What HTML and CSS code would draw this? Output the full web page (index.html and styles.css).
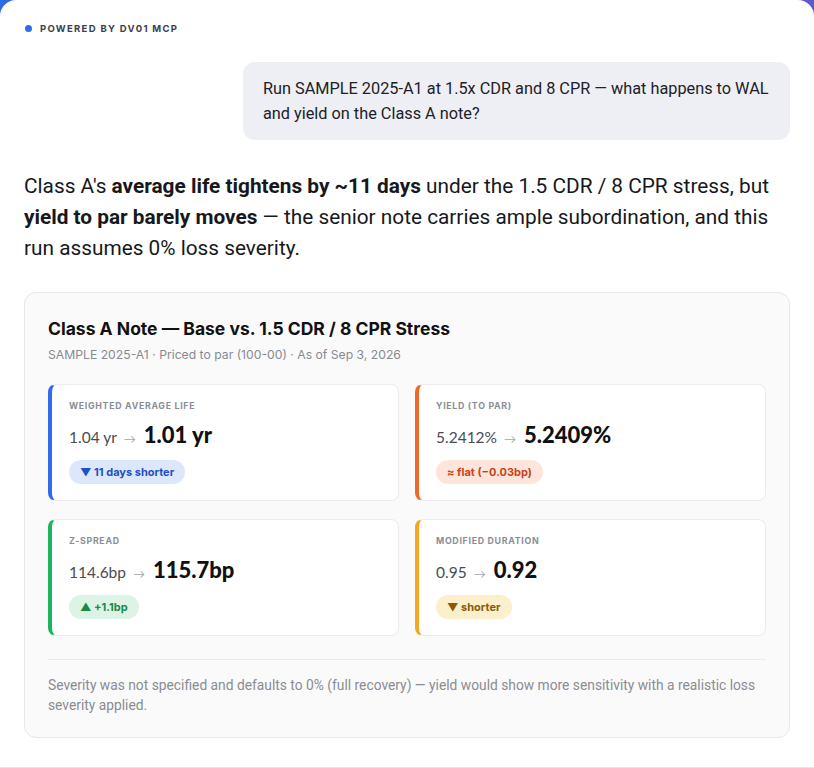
FILE: index.html
```html
<!DOCTYPE html>
<html lang="en">
<head>
  <meta charset="UTF-8">
  <meta name="viewport" content="width=device-width, initial-scale=1.0">
  <title>DV01 MCP - Class A stress run</title>
  <link rel="stylesheet" href="styles.css">
</head>

<body>
  <div id="panel">
    <div class="brand">
      <span class="brand-dot"></span>
      <span>POWERED BY DV01 MCP</span>
    </div>

    <div class="bubble-row">
      <div class="bubble">Run SAMPLE 2025-A1 at 1.5x CDR and 8 CPR — what happens to WAL and yield on the Class A note?</div>
    </div>

    <p class="answer">Class A's <b>average life tightens by ~11 days</b> under the 1.5 CDR / 8 CPR stress, but <b>yield to par barely moves</b> — the senior note carries ample subordination, and this run assumes 0% loss severity.</p>

    <div class="card">
      <h3>Class A Note — Base vs. 1.5 CDR / 8 CPR Stress</h3>
      <div class="sub">SAMPLE 2025-A1 · Priced to par (100-00) · As of Sep 3, 2026</div>

      <div class="tiles">
        <div class="tile blue">
          <div class="label">WEIGHTED AVERAGE LIFE</div>
          <div class="values"><span class="old">1.04 yr</span><span class="arrow">→</span><span class="new">1.01 yr</span></div>
          <span class="badge">▼ 11 days shorter</span>
        </div>
        <div class="tile orange">
          <div class="label">YIELD (TO PAR)</div>
          <div class="values"><span class="old">5.2412%</span><span class="arrow">→</span><span class="new">5.2409%</span></div>
          <span class="badge">≈ flat (−0.03bp)</span>
        </div>
        <div class="tile green">
          <div class="label">Z-SPREAD</div>
          <div class="values"><span class="old">114.6bp</span><span class="arrow">→</span><span class="new">115.7bp</span></div>
          <span class="badge">▲ +1.1bp</span>
        </div>
        <div class="tile amber">
          <div class="label">MODIFIED DURATION</div>
          <div class="values"><span class="old">0.95</span><span class="arrow">→</span><span class="new">0.92</span></div>
          <span class="badge">▼ shorter</span>
        </div>
      </div>

      <div class="note">Severity was not specified and defaults to 0% (full recovery) — yield would show more sensitivity with a realistic loss severity applied.</div>
    </div>
  </div>
</body>

</html>
```

FILE: styles.css
```css
body {
  margin: 0;
  padding: 0;
  background: linear-gradient(90deg, #2f6be8, #5a5bd4);
  font-family: Inter, "Noto Sans", sans-serif;
  color: #1b1c20;
}

#panel {
  background-color: #fff;
  border-radius: 16px 16px 0 0;
  height: 768px;
  border-bottom: 1px solid #e4e4ee;
  padding: 22px 24px 0 24px;
  box-sizing: border-box;
  overflow: hidden;
}

.brand {
  display: flex;
  align-items: center;
  gap: 8px;
  height: 12px;
  font-size: 9.5px;
  font-weight: 700;
  letter-spacing: 1.3px;
  color: #3c404a;
}

.brand-dot {
  width: 7px;
  height: 7px;
  border-radius: 50%;
  background-color: #2f6bea;
  margin-left: 1px;
}

.bubble-row {
  display: flex;
  justify-content: flex-end;
  margin-top: 28px;
}

.bubble {
  width: 507px;
  background-color: #eeeff4;
  border-radius: 12px;
  padding: 14px 20px;
  font-family: Roboto, sans-serif;
  font-size: 16.3px;
  line-height: 25px;
  color: #202126;
}

.answer {
  margin: 31px 0 0 0;
  font-family: Roboto, sans-serif;
  font-size: 20.8px;
  line-height: 31px;
  color: #17181c;
}

.answer b {
  font-weight: 700;
}

.card {
  margin-top: 28px;
  background-color: #fafafa;
  border: 1px solid #e7e7ec;
  border-radius: 12px;
  padding: 24px 23px 22px 23px;
}

.card h3 {
  margin: 0;
  font-size: 17.5px;
  line-height: 24px;
  font-weight: 700;
  color: #111;
}

.sub {
  margin-top: 5px;
  font-size: 12.2px;
  line-height: 18px;
  color: #878a92;
}

.tiles {
  display: grid;
  grid-template-columns: 1fr 1fr;
  column-gap: 16px;
  row-gap: 18px;
  margin-top: 20px;
}

.tile {
  background-color: #fff;
  border: 1px solid #ececf0;
  border-left: 4px solid;
  border-radius: 8px;
  padding: 14px 17px 16px 17px;
}

.tile.blue { border-left-color: #2f6bea; }
.tile.orange { border-left-color: #f0672c; }
.tile.green { border-left-color: #1db55c; }
.tile.amber { border-left-color: #f5a623; }

.label {
  font-size: 8.8px;
  line-height: 14px;
  font-weight: 700;
  letter-spacing: 0.7px;
  color: #8a8d95;
}

.values {
  display: flex;
  align-items: baseline;
  margin-top: 8px;
  height: 30px;
  font-family: Lato, sans-serif;
}

.old {
  font-size: 15.5px;
  color: #4a4c52;
}

.arrow {
  font-size: 12px;
  color: #a3a6ad;
  margin: 0 8px 0 7px;
}

.new {
  font-size: 22px;
  font-weight: 900;
  color: #111;
}

.badge {
  display: inline-block;
  margin-top: 9px;
  height: 24px;
  line-height: 24px;
  padding: 0 11px;
  border-radius: 12px;
  font-size: 11px;
  font-weight: 700;
}

.blue .badge { background-color: #dde7fb; color: #1f4fc2; }
.orange .badge { background-color: #fde5dc; color: #c8431a; }
.green .badge { background-color: #dcf3e5; color: #1a8a48; }
.amber .badge { background-color: #fcefcc; color: #8a5a08; }

.note {
  margin-top: 23px;
  border-top: 1px solid #e9e9ee;
  padding-top: 15px;
  font-family: Roboto, sans-serif;
  font-size: 13.8px;
  line-height: 20px;
  color: #8a8c93;
}
```
